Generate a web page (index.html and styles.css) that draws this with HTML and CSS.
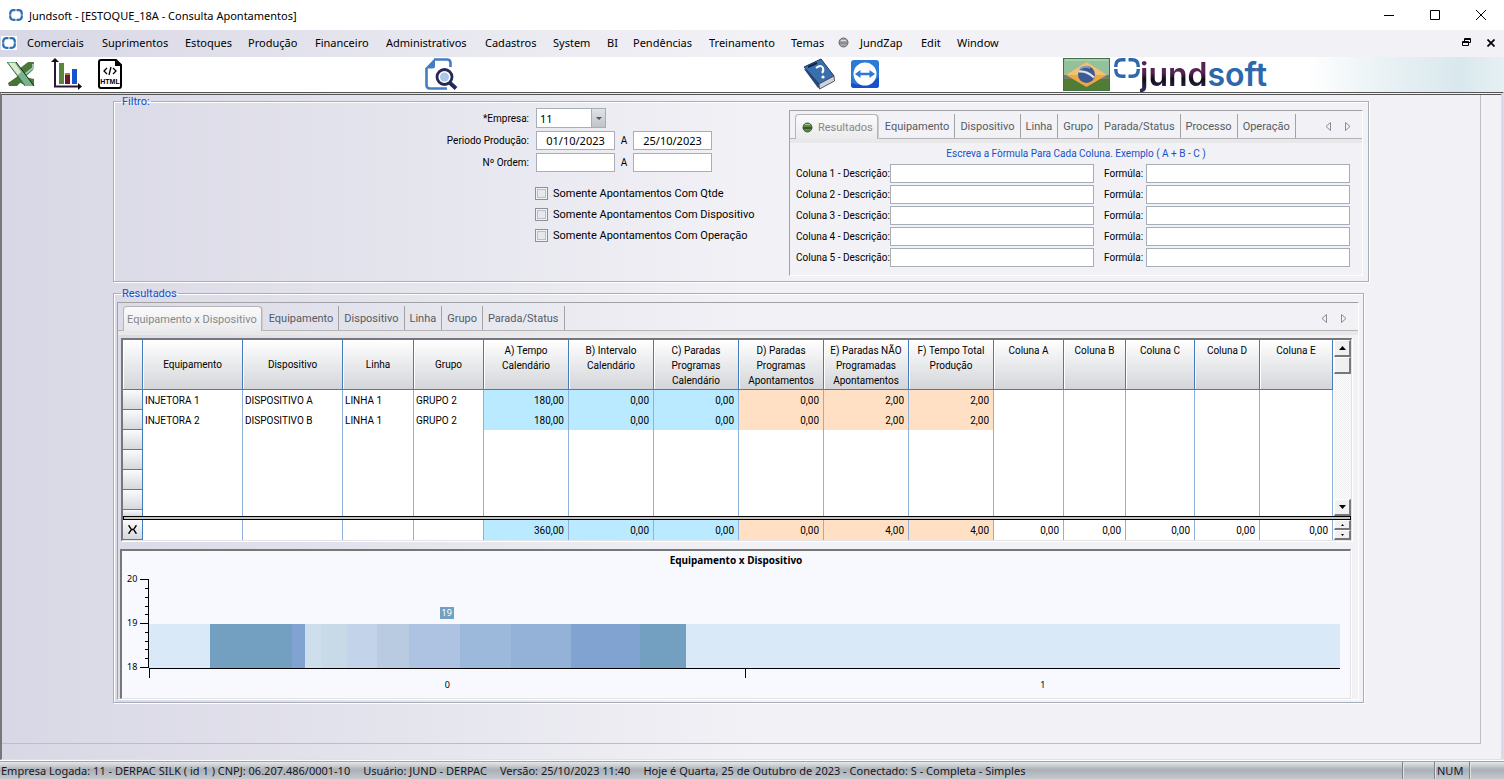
FILE: index.html
```html
<!DOCTYPE html>
<html lang="pt-BR">
<head>
<meta charset="utf-8">
<title>Jundsoft - [ESTOQUE_18A - Consulta Apontamentos]</title>
<link rel="stylesheet" href="styles.css">
</head>
<body>
<svg class="defs" width="0" height="0" aria-hidden="true">
  <symbol id="mark" viewBox="0 0 26 20">
    <path d="M11.500 1.800H8Q1.800 1.800 1.800 8V9M14.500 1.800h3.500q6.200 0 6.200 6.200v1M11.500 18.200H8Q1.800 18.200 1.800 12v-1M14.500 18.200h3.500q6.200 0 6.200-6.200v-1" fill="none" stroke="#2c68ac" stroke-width="3.400"/>
  </symbol>
  <symbol id="mark-small" viewBox="0 0 14 12">
    <path d="M6.500 1.200H4.500Q1.200 1.200 1.200 4.500v3q0 3.300 3.300 3.300h2M7.500 1.200h2q3.300 0 3.300 3.300v3q0 3.300-3.300 3.300h-2" fill="none" stroke="#2f6fb4" stroke-width="2.200"/>
    <path d="M0 6h14" stroke="#fff" stroke-opacity=".5"/>
  </symbol>
</svg>
<div class="app">
  <header class="titlebar">
    <svg class="mark-small"><use href="#mark-small"/></svg>
    <h1 class="title">Jundsoft - [ESTOQUE_18A - Consulta Apontamentos]</h1>
    <div class="window-buttons">
      <button aria-label="Minimizar"><svg width="12" height="12"><path d="M1 6.500h10" stroke="#000"/></svg></button>
      <button aria-label="Maximizar"><svg width="12" height="12"><path d="M1.500 1.500h9v9h-9z" fill="none" stroke="#000"/></svg></button>
      <button aria-label="Fechar"><svg width="12" height="12"><path d="M1 1l10 10M11 1L1 11" stroke="#000"/></svg></button>
    </div>
  </header>

  <nav class="menubar">
    <span class="menu-logo"><svg class="mark-small"><use href="#mark-small"/></svg></span>
    <div class="menus">
      <button>Comerciais</button><button>Suprimentos</button><button>Estoques</button><button>Produção</button><button>Financeiro</button><button>Administrativos</button><button>Cadastros</button><button>System</button><button>BI</button><button>Pendências</button><button>Treinamento</button><button>Temas</button>
      <button class="menu-zap"><svg width="11" height="11"><circle cx="5.500" cy="5.500" r="4.500" fill="#a2a4a6" stroke="#666"/><path d="M1 6h9" stroke="#777"/><path d="M3 3.500h5" stroke="#ddd"/></svg>JundZap</button><button>Edit</button><button>Window</button>
    </div>
    <div class="mdi-buttons">
      <button aria-label="Restaurar janela"><svg width="9" height="9"><path d="M2.500 3V.500h6v4H7M2.500 1.500h6M.500 3.500h6v4h-6zM.500 4.500h6" fill="none" stroke="#000"/></svg></button>
      <button aria-label="Fechar janela"><svg width="8" height="8"><path d="M.500.500l7 7M7.500.500l-7 7" stroke="#000" stroke-width="1.700"/></svg></button>
    </div>
  </nav>

  <div class="toolbar">
    <div class="tools tools-export">
      <button aria-label="Exportar para Excel"><svg width="28" height="26" viewBox="0 0 28 26">
        <path d="M12 8L21 1h6l-1 8-8 7 9 2v6l-1 1h-6L9 20z" fill="#49783a"/><path d="M26 3v4l-9 7" fill="none" stroke="#9cc6ac" stroke-width="2"/>
        <path d="M0 1h9l18 24h-8z" fill="#79b38d"/><path d="M1 2h7l6 9-3 3z" fill="#dce9cb"/><path d="M9 1l18 24" stroke="#15251a"/><path d="M1 22l10-7 4 5-5 5H2z" fill="#477336"/><path d="M0 1l18 24" stroke="#3c6d48"/>
      </svg></button>
      <button aria-label="Gráfico"><svg width="31" height="32" viewBox="0 0 31 32">
        <path d="M4 3v25.500h23" fill="none" stroke="#2e1536" stroke-width="2"/><path d="M0 4l4-4 4 4zM27 25l4 3.500-4 3.500z" fill="#111"/>
        <path d="M8 5h5v21H8z" fill="#5b853f"/><path d="M14 17h5v9h-5z" fill="#69172d"/><path d="M14 16h5" stroke="#b37937" stroke-width="2"/><path d="M21 11h5v15h-5z" fill="#1853cd"/>
      </svg></button>
      <button aria-label="Exportar HTML"><svg width="24" height="30" viewBox="0 0 24 30">
        <path d="M3 1h15l5 5v21q0 2-2 2H3q-2 0-2-2V3q0-2 2-2z" fill="#fff" stroke="#000" stroke-width="2"/><path d="M17 1v6h6z"/>
        <path d="M9 9l-3 3 3 3M15 9l3 3-3 3M13 8l-2 8" fill="none" stroke="#000" stroke-width="1.300"/>
        <text x="12" y="25" text-anchor="middle" class="svg-html">HTML</text>
      </svg></button>
    </div>
    <div class="tools">
      <button aria-label="Pesquisar"><svg width="33" height="32" viewBox="0 0 33 32">
        <path d="M9 1.500h13q3.500 0 3.500 3.500v4M1.500 10v17q0 3.500 3.500 3.500h17" fill="none" stroke="#447dc3" stroke-width="2.600"/><path d="M0 10.500L10 0v8q0 2.500-2.500 2.500z" fill="#447dc3"/>
        <circle cx="19.500" cy="19" r="7.500" fill="#fff" stroke="#262858" stroke-width="2.800"/><circle cx="19.500" cy="19" r="4.500" fill="#acc6e5"/><path d="M24.500 24.500l6.500 6" stroke="#262858" stroke-width="4"/>
      </svg></button>
    </div>
    <div class="tools tools-help">
      <button aria-label="Ajuda"><svg width="33" height="32" viewBox="0 0 33 32">
        <path d="M1 11L15 30l16-8v-5z" fill="#234a7e"/><path d="M1 9L18 1l13 17-15 8z" fill="#3a6fae" stroke="#1f3863"/><path d="M16 26l15-8 .500 5L16.500 31z" fill="#cfd4dc" stroke="#556"/>
        <path d="M5 9l9-4" stroke="#102447" stroke-width="2"/><path d="M13 10q5-4 7 0 1 3-1 5" fill="none" stroke="#fff" stroke-width="2"/><circle cx="20" cy="19" r="1.600" fill="#fff"/>
      </svg></button>
      <button aria-label="Acesso remoto"><svg width="28" height="28" viewBox="0 0 28 28">
        <rect width="28" height="28" rx="3" fill="#2d7ad5"/><path d="M28 17v8q0 3-3 3H3q-3 0-3-3v-2q16 6 28-6z" fill="#174fcc"/><circle cx="14" cy="14" r="11.500" fill="#fff"/>
        <path d="M4 14l5.500-4v2.800h9V10l5.500 4-5.500 4v-2.800h-9V18z" fill="#2d7ad5"/>
      </svg></button>
    </div>
    <div class="tools tools-brand">
      <svg class="flag" width="47" height="33" viewBox="0 0 47 33" role="img" aria-label="Brasil">
        <path d="M0 0h47v33H0z" fill="#3f7345"/><path d="M1 1h45v18H1z" fill="#92c19b"/><path d="M1 21h45v11H1z" fill="#527c35"/><path d="M1 17h45v4H1z" fill="#6f8068"/><path d="M2 2h43" stroke="#c2dcc5"/>
        <path d="M23.500 4L44 17 23.500 29 3 17z" fill="#eca847"/><path d="M23.500 4L44 17H3z" fill="#f1c272"/><circle cx="23.500" cy="16.500" r="8.500" fill="#3e5a92"/><path d="M15.500 13.500q8-1 15.500 6" fill="none" stroke="#dfe5ec" stroke-width="2"/><path d="M17 11q5-4 10-1" fill="none" stroke="#8698bd" stroke-width="2"/>
      </svg>
      <div class="brand"><svg width="26" height="20"><use href="#mark"/></svg><span class="brand-word"><span class="brand-dark">jund</span>soft</span></div>
    </div>
  </div>

  <main class="workspace">
    <div class="sheet">
      <fieldset class="group filter">
        <legend>Filtro:</legend>
        <form class="filter-form">
          <div class="fields">
            <label for="empresa">*Empresa:</label>
            <div class="pair"><span class="combo"><select id="empresa"><option>11</option></select><span class="combo-arrow"></span></span></div>
            <label for="de">Periodo Produção:</label>
            <div class="pair"><input id="de" value="01/10/2023"><label for="ate">A</label><input id="ate" value="25/10/2023"></div>
            <label for="ordem1">Nº Ordem:</label>
            <div class="pair"><input id="ordem1"><label for="ordem2">A</label><input id="ordem2"></div>
          </div>
          <div class="checks">
            <label><input type="checkbox">Somente Apontamentos Com Qtde</label>
            <label><input type="checkbox">Somente Apontamentos Com Dispositivo</label>
            <label><input type="checkbox">Somente Apontamentos Com Operação</label>
          </div>
        </form>
        <div class="tabbox formulas">
          <div class="tabs">
            <button class="tab active"><svg width="11" height="11"><circle cx="5.500" cy="5.500" r="4.500" fill="#5b8a48" stroke="#3d5c38"/><path d="M1 6h9" stroke="#35592c" stroke-width="2"/><path d="M3 2.500h5" stroke="#a9c59b"/></svg>Resultados</button>
            <button class="tab">Equipamento</button><button class="tab">Dispositivo</button><button class="tab">Linha</button><button class="tab">Grupo</button><button class="tab">Parada/Status</button><button class="tab">Processo</button><button class="tab">Operação</button>
            <span class="tab-nav"><button aria-label="Anterior"><svg width="6" height="9"><path d="M5.500.500v8L1 4.500z" fill="none" stroke="#8b8b95"/></svg></button><button aria-label="Próximo"><svg width="6" height="9"><path d="M.500.500v8L5 4.500z" fill="none" stroke="#8b8b95"/></svg></button></span>
          </div>
          <p class="hint">Escreva a Fòrmula Para Cada Coluna. Exemplo ( A + B - C )</p>
          <div class="formula-grid">
            <label for="d1">Coluna 1 - Descrição:</label><input id="d1"><label for="f1">Formúla:</label><input id="f1">
            <label for="d2">Coluna 2 - Descrição:</label><input id="d2"><label for="f2">Formúla:</label><input id="f2">
            <label for="d3">Coluna 3 - Descrição:</label><input id="d3"><label for="f3">Formúla:</label><input id="f3">
            <label for="d4">Coluna 4 - Descrição:</label><input id="d4"><label for="f4">Formúla:</label><input id="f4">
            <label for="d5">Coluna 5 - Descrição:</label><input id="d5"><label for="f5">Formúla:</label><input id="f5">
          </div>
        </div>
      </fieldset>

      <fieldset class="group results">
        <legend>Resultados</legend>
        <div class="tabbox">
          <div class="tabs">
            <button class="tab active">Equipamento x Dispositivo</button><button class="tab">Equipamento</button><button class="tab">Dispositivo</button><button class="tab">Linha</button><button class="tab">Grupo</button><button class="tab">Parada/Status</button>
            <span class="tab-nav"><button aria-label="Anterior"><svg width="6" height="9"><path d="M5.500.500v8L1 4.500z" fill="none" stroke="#8b8b95"/></svg></button><button aria-label="Próximo"><svg width="6" height="9"><path d="M.500.500v8L5 4.500z" fill="none" stroke="#8b8b95"/></svg></button></span>
          </div>
          <div class="sunken data">
            <table class="grid">
              <colgroup><col class="w20"><col class="w100"><col class="w100"><col class="w71"><col class="w70"><col class="w85"><col class="w85"><col class="w85"><col class="w85"><col class="w85"><col class="w85"><col class="w70"><col class="w62"><col class="w69"><col class="w65"><col class="w73"></colgroup>
              <thead><tr><th></th><th>Equipamento</th><th>Dispositivo</th><th>Linha</th><th>Grupo</th><th class="top">A) Tempo<br>Calendário</th><th class="top">B) Intervalo<br>Calendário</th><th class="top">C) Paradas<br>Programas<br>Calendário</th><th class="top">D) Paradas<br>Programas<br>Apontamentos</th><th class="top">E) Paradas NÃO<br>Programadas<br>Apontamentos</th><th class="top">F) Tempo Total<br>Produção</th><th class="top">Coluna A</th><th class="top">Coluna B</th><th class="top">Coluna C</th><th class="top">Coluna D</th><th class="top">Coluna E</th></tr></thead>
              <tbody>
                <tr><td class="sel"></td><td>INJETORA 1</td><td>DISPOSITIVO A</td><td>LINHA 1</td><td>GRUPO 2</td><td class="n b">180,00</td><td class="n b">0,00</td><td class="n b">0,00</td><td class="n p">0,00</td><td class="n p">2,00</td><td class="n p">2,00</td><td></td><td></td><td></td><td></td><td></td></tr>
                <tr><td class="sel"></td><td>INJETORA 2</td><td>DISPOSITIVO B</td><td>LINHA 1</td><td>GRUPO 2</td><td class="n b">180,00</td><td class="n b">0,00</td><td class="n b">0,00</td><td class="n p">0,00</td><td class="n p">2,00</td><td class="n p">2,00</td><td></td><td></td><td></td><td></td><td></td></tr>
                <tr><td class="sel"></td><td></td><td></td><td></td><td></td><td></td><td></td><td></td><td></td><td></td><td></td><td></td><td></td><td></td><td></td><td></td></tr>
                <tr><td class="sel"></td><td></td><td></td><td></td><td></td><td></td><td></td><td></td><td></td><td></td><td></td><td></td><td></td><td></td><td></td><td></td></tr>
                <tr><td class="sel"></td><td></td><td></td><td></td><td></td><td></td><td></td><td></td><td></td><td></td><td></td><td></td><td></td><td></td><td></td><td></td></tr>
                <tr><td class="sel"></td><td></td><td></td><td></td><td></td><td></td><td></td><td></td><td></td><td></td><td></td><td></td><td></td><td></td><td></td><td></td></tr>
                <tr class="cut"><td class="sel"></td><td></td><td></td><td></td><td></td><td></td><td></td><td></td><td></td><td></td><td></td><td></td><td></td><td></td><td></td><td></td></tr>
              </tbody>
              <tfoot>
                <tr class="split"><td colspan="16"></td></tr>
                <tr><td class="sel sum"><svg width="9" height="9"><path d="M1 0v1l2.500 3.500L1 8v1M8 0v1L5.500 4.500 8 8v1M3.500 4.500h2" fill="none" stroke="#000" stroke-width="1.300"/></svg></td><td></td><td></td><td></td><td></td><td class="n b">360,00</td><td class="n b">0,00</td><td class="n b">0,00</td><td class="n p">0,00</td><td class="n p">4,00</td><td class="n p">4,00</td><td class="n">0,00</td><td class="n">0,00</td><td class="n">0,00</td><td class="n">0,00</td><td class="n">0,00</td></tr>
              </tfoot>
            </table>
            <div class="scroll">
              <button class="sb" aria-label="Rolar para cima"><svg width="7" height="4"><path d="M0 4h7L3.500 0z"/></svg></button>
              <span class="sb thumb"></span>
              <span class="track"></span>
              <button class="sb" aria-label="Rolar para baixo"><svg width="7" height="4"><path d="M0 0h7L3.500 4z"/></svg></button>
              <span class="split-bar"></span>
              <button class="sb half" aria-label="Acima"><svg width="3" height="2"><path d="M0 2h3L1.500 0z"/></svg></button>
              <button class="sb half" aria-label="Abaixo"><svg width="3" height="2"><path d="M0 0h3L1.500 2z"/></svg></button>
            </div>
          </div>
          <div class="sunken chart">
            <h2 class="chart-title">Equipamento x Dispositivo</h2>
            <div class="chart-body">
              <div class="y-axis">
                <div class="y-labels"><span>20</span><span>19</span><span>18</span></div>
                <svg width="10" height="90"><path d="M9.500 0v89M1 .500h9M1 44.500h9M1 88.500h9M6 9.500h4M6 18.500h4M6 27.500h4M6 35.500h4M6 53.500h4M6 62.500h4M6 70.500h4M6 79.500h4" stroke="#000" fill="none"/></svg>
              </div>
              <div class="plot">
                <div class="above"><span class="cat"><b class="point">19</b></span><span class="cat"></span></div>
                <svg class="bars" viewBox="0 0 1191 44" preserveAspectRatio="none" shape-rendering="crispEdges">
                  <path d="M0 0h1191v44H0z" fill="#d9e9f7"/><path d="M61 0h82v44H61z" fill="#739fc1"/><path d="M143 0h13v44h-13z" fill="#80a3d1"/><path d="M156 0h16v44h-16z" fill="#cfdeeb"/><path d="M172 0h26v44h-26z" fill="#c8d9e8"/><path d="M198 0h30v44h-30z" fill="#c3d3ea"/><path d="M228 0h32v44h-32z" fill="#b9cbe0"/><path d="M260 0h51v44h-51z" fill="#aec3e1"/><path d="M311 0h51v44h-51z" fill="#9cb8da"/><path d="M362 0h60v44h-60z" fill="#94b1d7"/><path d="M422 0h69v44h-69z" fill="#80a3d1"/><path d="M491 0h46v44h-46z" fill="#739fc1"/>
                </svg>
                <div class="x-axis"><span class="cat tick">0</span><span class="cat tick">1</span></div>
              </div>
            </div>
          </div>
        </div>
      </fieldset>
    </div>
  </main>

  <footer class="status">
    <div class="status-text"><span>Empresa Logada: 11 - DERPAC SILK ( id 1 ) CNPJ: 06.207.486/0001-10</span><span>Usuário: JUND - DERPAC</span><span>Versão: 25/10/2023 11:40</span><span>Hoje é Quarta, 25 de Outubro de 2023 - Conectado: S - Completa - Simples</span></div>
    <div class="cell"></div><div class="cell">NUM</div><div class="cell"></div>
  </footer>
</div>
</body>
</html>
```
FILE: styles.css
```css
* { box-sizing: border-box; }
body { margin: 0; font-family: "Noto Sans", "Open Sans", sans-serif; font-size: 11px; color: #000; background: #fff; }
button { border: 0; padding: 0; margin: 0; background: none; font: inherit; color: inherit; display: flex; align-items: center; justify-content: center; }
svg { display: block; flex: none; }
.defs { position: absolute; }
.app { min-height: 100vh; display: flex; flex-direction: column; }

.titlebar { height: 30px; display: flex; align-items: center; padding-left: 9px; gap: 6px; }
.mark-small { width: 14px; height: 12px; }
.title { margin: 0; flex: 1; font-size: 11px; font-weight: 400; }
.window-buttons { display: flex; }
.window-buttons button { width: 46px; height: 28px; }

.menubar { height: 27px; display: flex; align-items: center; padding-bottom: 2px; background: linear-gradient(90deg, #d8d7e5, #e7e7ef 28%, #f2f1f6 50%); }
.menu-logo { width: 16px; height: 14px; margin: 0 10px 0 1px; background: #fff; display: flex; align-items: center; justify-content: center; }
.menus { flex: 1; display: grid; grid-template-columns: 75px 83px 63px 67px 71px 99px 68px 54px 26px 76px 82px 47px 83px 36px auto; justify-content: start; }
.menus button { justify-content: start; white-space: nowrap; line-height: 20px; }
.menu-zap { gap: 11px; }
.mdi-buttons { display: flex; gap: 16px; padding-right: 9px; }

.toolbar { height: 35px; display: grid; grid-template-columns: 425fr 378fr 260fr 441fr; background: #fff; }
.tools { display: flex; align-items: center; padding-bottom: 1px; }
.tools-export { padding-left: 7px; gap: 16px; }
.tools-help { gap: 15px; }
.tools-brand { background: linear-gradient(90deg, #fff 55%, #eaf2f5 72%, #d9e8ed 90%, #e6f0f3); }
.svg-html { font: bold 7px "Liberation Sans", sans-serif; }
.brand { display: flex; align-items: flex-start; height: 33px; padding-left: 4px; }
.brand-word { font: 600 32px/33px Inter, sans-serif; color: #2c68ac; }
.brand-dark { background: linear-gradient(#562454 45%, #100c18 62%, #37295c 90%); -webkit-background-clip: text; background-clip: text; color: transparent; }

.workspace { flex: 1; display: flex; border: 1px solid #8f8f8f; border-top: 3px double #555; border-left: 2px solid #777; border-bottom-color: #e0e0dc; border-right: 3px double #ddd; padding: 0 20px 15px 0; background: linear-gradient(90deg, #d8d7e5, #e5e5ee 28%, #f2f1f6 50%); font-family: Roboto, "Liberation Sans", sans-serif; }
.sheet { flex: 1; min-width: 0; border-right: 1px solid #bdbdc5; border-bottom: 1px solid #bdbdc5; padding: 0 111px; }
.group { min-width: 0; margin: 0; border: 1px solid #a6aeb9; box-shadow: 1px 1px #fff, inset 1px 1px #fff; }
.group legend { color: #1650c8; font-size: 11px; line-height: 13px; padding: 0 1px; margin-left: 7px; }
.filter { display: flex; justify-content: space-between; padding: 0 5px 6px 0; height: 187px; }
.filter-form { flex: 1; padding: 0 0 0 250px; display: flex; flex-direction: column; }
.fields { display: grid; grid-template-columns: 165px auto; justify-content: start; column-gap: 7px; row-gap: 3px; align-items: center; font-size: 10px; }
.fields > label { text-align: right; }
.pair { display: flex; align-items: center; }
.pair label { width: 18px; text-align: center; }
input, select { font-family: "Noto Sans", "Open Sans", sans-serif; font-size: 11px; border: 1px solid #a6aeb9; border-radius: 0; background: #fff; color: #000; height: 19px; padding: 0; margin: 0; }
.pair input { width: 79px; text-align: center; }
.combo { position: relative; width: 70px; height: 20px; }
.combo select { appearance: none; width: 100%; height: 20px; padding-left: 3px; }
.combo-arrow { position: absolute; right: 1px; top: 1px; bottom: 1px; width: 14px; border-left: 1px solid #a6aeb9; background: linear-gradient(#e0e3e6, #bfc4ca); pointer-events: none; }
.combo-arrow::after { content: ""; position: absolute; left: 4px; top: 8px; border: 3px solid transparent; border-top-color: #555; border-bottom: 0; }
.checks { padding: 11px 0 0 171px; display: flex; flex-direction: column; gap: 1px; }
.checks label { display: flex; align-items: center; gap: 5px; height: 20px; }
.checks input { appearance: none; width: 13px; height: 13px; border: 1px solid #8b8f99; box-shadow: inset 0 0 0 1px #f2f2f5, inset 0 0 0 2px #b9bec8; background: #e6e8ec; }

.tabbox { border: 1px solid #a2a2a4; border-right-color: #fff; border-bottom-color: #fff; }
.tabs { display: flex; align-items: stretch; height: 28px; padding: 3px 0 0 5px; border-bottom: 1px solid #b5b5b7; box-shadow: 0 4px #e8e8ea; color: #555b5e; }
.tab { padding: 0 5px; border-right: 1px solid #a2a2a4; white-space: nowrap; }
.tab.active { color: #85898b; border: 1px solid #b5b5b7; border-bottom: 0; border-radius: 4px 4px 0 0; background: linear-gradient(#fafafb, #ebebed); margin-bottom: -1px; padding: 0 4px 0 3px; margin-right: 2px; box-shadow: 1px 0 #ccc; }
.tab-nav { margin-left: auto; display: flex; gap: 14px; padding-right: 11px; }
.formulas { width: 574px; height: 166px; margin-top: 2px; }
.formulas .tab.active { padding: 0 4px 0 6px; gap: 5px; }
.hint { margin: 0; padding-top: 7px; text-align: center; color: #1650c8; font-size: 10px; line-height: 16px; }
.formula-grid { display: grid; grid-template-columns: 89px 1fr 42px 1fr; column-gap: 5px; row-gap: 2px; align-items: center; font-size: 10px; padding: 2px 12px 0 6px; }
.formula-grid input { width: 100%; min-width: 0; }
.formula-grid label { white-space: nowrap; }
.formula-grid label:nth-of-type(even) { padding-left: 5px; }

.results { margin: 5px 5px 0 0; padding: 2px 4px 2px 3px; }
.results legend { margin-left: 4px; }
.sunken { border: 2px solid #777; border-right: 1px solid #e3e3e3; border-bottom: 1px solid #e3e3e3; box-shadow: 1px 1px #fff; }
.data { display: flex; margin: 7px 6px 0 3px; background: #fff; }
.grid { flex: 1; min-width: 0; table-layout: fixed; border-collapse: separate; border-spacing: 0; font-size: 10px; line-height: 15px; }
.w20 { width: 20px; } .w62 { width: 62px; } .w65 { width: 65px; } .w69 { width: 69px; } .w70 { width: 70px; } .w71 { width: 71px; } .w73 { width: 73px; } .w85 { width: 85px; } .w100 { width: 100px; }
.grid th { height: 50px; padding: 0; font-weight: 400; border-right: 1px solid #447dbd; border-bottom: 1px solid #447dbd; box-shadow: inset 1px 0 #fff; background: linear-gradient(#fff, #e9eaec 50%, #d3d5d9); }
.grid th.top { vertical-align: top; padding-top: 3px; }
.grid td { height: 20px; padding: 0 4px 0 2px; border-right: 1px solid #8fb0d8; white-space: nowrap; }
.grid .sel { padding: 0; border-right: 1px solid #447dbd; border-bottom: 1px solid #447dbd; background: linear-gradient(#fbfbfc, #d6d8dc); }
.grid .cut td { height: 6px; border-bottom: 0; }
.grid .split td { height: 4px; padding: 0; border: solid #000; border-width: 1px 0 1px 1px; background: #c4c4c4; }
.grid .n { text-align: right; }
.grid .b { background: #b9eaff; }
.grid .p { background: #ffe0c4; }
.sum svg { margin: 0 auto; }
.scroll { width: 17px; margin-left: 1px; display: flex; flex-direction: column; }
.sb { height: 17px; background: #f0f0f0; border: 1px solid #fff; border-right: 2px solid #777; border-bottom: 2px solid #777; }
.thumb { display: block; }
.track { flex: 1; background: repeating-conic-gradient(#fff 0 25%, #ececec 0 50%) 0 0 / 2px 2px; }
.split-bar { height: 4px; margin-left: -1px; border: solid #000; border-width: 1px 1px 1px 0; background: #c4c4c4; }
.half { height: 10px; }

.chart { margin: 8px 7px 0 2px; background: #f8f9ff; height: 150px; font-family: "Noto Sans", "Open Sans", sans-serif; }
.chart-title { margin: 0; text-align: center; font-size: 10px; line-height: 18px; font-weight: 700; }
.chart-body { display: flex; padding: 10px 10px 0 5px; }
.y-axis { display: flex; width: 22px; justify-content: space-between; }
.y-labels { display: flex; flex-direction: column; justify-content: space-between; height: 102px; margin-top: -7px; line-height: 14px; font-size: 9px; }
.plot { flex: 1; min-width: 0; }
.above, .x-axis { display: grid; grid-template-columns: 1fr 1fr; text-align: center; }
.above { height: 45px; }
.point { display: inline-block; margin-top: 28px; padding: 0 2px; background: #739fc1; color: #fff; font-weight: 400; font-size: 9px; line-height: 12px; }
.bars { width: 100%; height: 44px; }
.x-axis { border-top: 1px solid #000; font-size: 9px; }
.tick { border-left: 1px solid #000; height: 9px; padding-top: 9px; line-height: 14px; }

.status { height: 18px; margin-top: 1px; display: flex; border-top: 1px solid #9ba3ad; background: linear-gradient(#e6e8ea, #abb0b8 45%, #b1b6bd 60%, #c5c9ce); font-size: 11px; line-height: 18px; color: #171722; }
.status-text { flex: 1; display: flex; gap: 13px; padding-left: 1px; white-space: nowrap; min-width: 0; }
.cell { width: 32px; border-left: 1px solid #7d838c; box-shadow: inset 1px 0 #e0e3e6; padding-left: 2px; }
.cell:nth-child(n+3) { width: 35px; }
```
